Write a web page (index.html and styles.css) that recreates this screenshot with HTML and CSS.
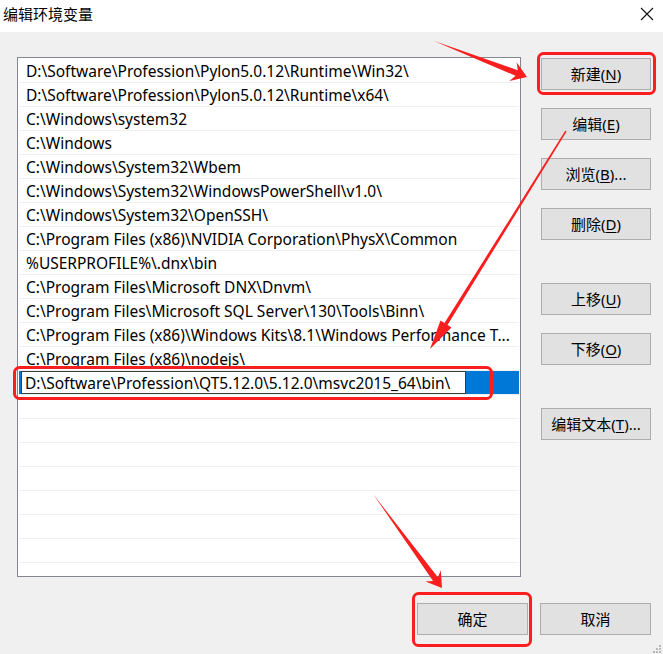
FILE: index.html
```html
<!DOCTYPE html>
<html lang="zh-CN">
<head>
<meta charset="utf-8">
<title>编辑环境变量</title>
<link rel="stylesheet" href="styles.css">
</head>
<body>
<div class="window">
  <div class="titlebar">
    <span class="title">编辑环境变量</span>
    <svg class="close" width="14" height="14" viewBox="0 0 14 14"><path d="M1 1 L13 13 M13 1 L1 13" stroke="#111" stroke-width="1.1" fill="none"/></svg>
  </div>
  <div class="main">
    <div class="list">
      <div class="row">D:\Software\Profession\Pylon5.0.12\Runtime\Win32\</div>
      <div class="row">D:\Software\Profession\Pylon5.0.12\Runtime\x64\</div>
      <div class="row">C:\Windows\system32</div>
      <div class="row">C:\Windows</div>
      <div class="row">C:\Windows\System32\Wbem</div>
      <div class="row">C:\Windows\System32\WindowsPowerShell\v1.0\</div>
      <div class="row">C:\Windows\System32\OpenSSH\</div>
      <div class="row">C:\Program Files (x86)\NVIDIA Corporation\PhysX\Common</div>
      <div class="row">%USERPROFILE%\.dnx\bin</div>
      <div class="row">C:\Program Files\Microsoft DNX\Dnvm\</div>
      <div class="row">C:\Program Files\Microsoft SQL Server\130\Tools\Binn\</div>
      <div class="row">C:\Program Files (x86)\Windows Kits\8.1\Windows Performance T...</div>
      <div class="row">C:\Program Files (x86)\nodejs\</div>
      <div class="row selected"><div class="editbox">D:\Software\Profession\QT5.12.0\5.12.0\msvc2015_64\bin\</div></div>
      <div class="row"></div><div class="row"></div><div class="row"></div><div class="row"></div>
      <div class="row"></div><div class="row"></div><div class="row"></div><div class="row"></div>
    </div>
    <div class="buttons">
      <div class="btn">新建(<u>N</u>)</div>
      <div class="btn">编辑(<u>E</u>)</div>
      <div class="btn">浏览(<u>B</u>)...</div>
      <div class="btn">删除(<u>D</u>)</div>
      <div class="btn sep">上移(<u>U</u>)</div>
      <div class="btn">下移(<u>O</u>)</div>
      <div class="btn sep">编辑文本(<u>T</u>)...</div>
    </div>
  </div>
  <div class="footer">
    <div class="btn">确定</div>
    <div class="btn">取消</div>
  </div>
  <svg class="overlay" width="663" height="654" viewBox="0 0 663 654">
    <g fill="#fa1e1e">
      <polygon points="434,41 515.6,75.8 509.4,80.9 527,77 516.6,62.3 517.8,70.2"/>
      <polygon points="566.6,131.4 447.5,325 440.5,320.6 430,349 451.5,327.6 444.5,322.9 565.4,130.6"/>
      <polygon points="373,494 433.1,580.9 425.4,581.6 442,588 440.8,570.2 437.9,577.3"/>
    </g>
    <g fill="none" stroke="#fa1e1e" stroke-width="3">
      <rect x="538.5" y="53.5" width="116" height="40" rx="5"/>
      <rect x="14.5" y="367.5" width="477" height="31" rx="5"/>
      <rect x="413.5" y="593.5" width="117" height="52" rx="5"/>
    </g>
    <g fill="#b8b8b8">
      <rect x="659" y="645" width="2" height="2"/>
      <rect x="656" y="648" width="2" height="2"/>
      <rect x="659" y="648" width="2" height="2"/>
      <rect x="653" y="651" width="2" height="2"/>
      <rect x="656" y="651" width="2" height="2"/>
      <rect x="659" y="651" width="2" height="2"/>
    </g>
  </svg>
</div>
</body>
</html>
```
FILE: styles.css
```css
html, body {
  margin: 0;
  padding: 0;
}
body {
  width: 663px;
  height: 654px;
  overflow: hidden;
  background: #f0f0f0;
  font-family: "Noto Sans", "Noto Sans CJK SC", sans-serif;
  font-size: 15px;
  color: #000;
}
.window {
  position: relative;
  width: 663px;
  height: 654px;
}
.titlebar {
  height: 32px;
  background: #fff;
  display: flex;
  align-items: center;
  justify-content: space-between;
  padding: 0 9px 4px 3px;
  box-sizing: border-box;
}
.title {
  font-family: "Noto Sans CJK SC", sans-serif;
  font-size: 15px;
  line-height: 20px;
}
.close {
  display: block;
}
.main {
  display: flex;
  align-items: flex-start;
  padding: 25px 0 0 17px;
  gap: 20px;
}
.list {
  width: 504px;
  height: 520px;
  box-sizing: border-box;
  border: 1px solid #828790;
  background: #fff;
  padding-top: 1px;
  overflow: hidden;
  font-size: 15.5px;
}
.row {
  height: 24px;
  box-sizing: border-box;
  border-bottom: 1px solid #f0f0f0;
  margin: 0 1px;
  padding-left: 7px;
  line-height: 24px;
  white-space: nowrap;
  overflow: hidden;
}
.row.selected {
  background: #0078d7;
  padding-left: 2px;
  border-bottom-color: #f0f0f0;
}
.editbox {
  width: 445px;
  height: 23px;
  box-sizing: border-box;
  border: 1px solid #3c3c3c;
  background: #fff;
  padding-left: 3px;
  line-height: 22px;
  white-space: nowrap;
  overflow: hidden;
}
.buttons {
  display: flex;
  flex-direction: column;
  gap: 18px;
  padding-top: 1px;
}
.btn {
  width: 110px;
  height: 32px;
  box-sizing: border-box;
  border: 1px solid #adadad;
  background: #e1e1e1;
  display: flex;
  align-items: center;
  justify-content: center;
  line-height: 20px;
  white-space: nowrap;
}
.btn u {
  text-decoration-thickness: 1px;
  text-underline-offset: 2px;
}
.buttons .sep {
  margin-top: 25px;
}
.footer {
  display: flex;
  justify-content: flex-end;
  gap: 12px;
  padding: 26px 12px 0 0;
}
.footer .btn {
  width: 111px;
}
.overlay {
  position: absolute;
  left: 0;
  top: 0;
  pointer-events: none;
}
```
